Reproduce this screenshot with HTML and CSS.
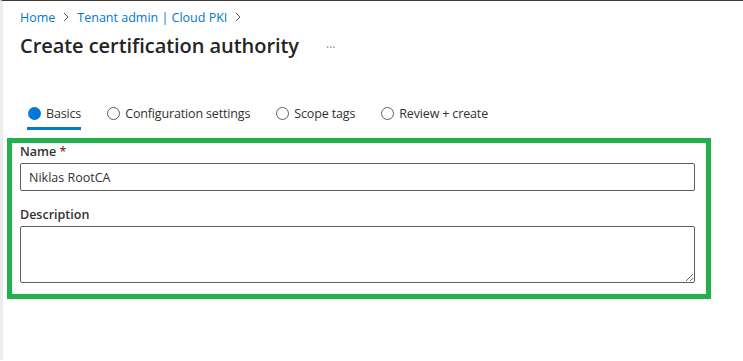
FILE: index.html
```html
<!DOCTYPE html>
<html>
<head>
<meta charset="utf-8">
<link rel="stylesheet" href="styles.css">
</head>
<body>
<div class="app">
  <div class="content">
    <nav class="crumbs">
      <a class="crumb">Home</a>
      <span class="chev"><svg width="8" height="10" viewBox="0 0 8 10"><path d="M2 1l4 4-4 4" fill="none" stroke="#605e5c" stroke-width="1"/></svg></span>
      <a class="crumb">Tenant admin | Cloud PKI</a>
      <span class="chev"><svg width="8" height="10" viewBox="0 0 8 10"><path d="M2 1l4 4-4 4" fill="none" stroke="#605e5c" stroke-width="1"/></svg></span>
    </nav>
    <div class="title-row">
      <h1 class="title">Create certification authority</h1>
      <span class="more">···</span>
    </div>
    <div class="tabs">
      <div class="tab active"><span class="dot filled"></span><span class="tab-label">Basics</span></div>
      <div class="tab"><span class="dot"></span><span class="tab-label">Configuration settings</span></div>
      <div class="tab"><span class="dot"></span><span class="tab-label">Scope tags</span></div>
      <div class="tab"><span class="dot"></span><span class="tab-label">Review + create</span></div>
    </div>
  </div>
  <section class="highlight">
    <label class="label">Name <span class="req">*</span></label>
    <div class="input">Niklas RootCA</div>
    <label class="label label-desc">Description</label>
    <textarea class="textarea"></textarea>
  </section>
</div>
</body>
</html>
```
FILE: styles.css
```css
html, body {
  margin: 0;
  padding: 0;
  background: #fff;
}
body {
  font-family: "Segoe UI", "Open Sans", "Noto Sans", sans-serif;
  color: #323130;
  font-size: 13px;
}
.app {
  border-top: 1px solid #3b3b3b;
  border-left: 3px solid #ebebeb;
  height: 360px;
  box-sizing: border-box;
}
.content {
  padding-left: 17px;
}
.crumbs {
  display: flex;
  align-items: center;
  gap: 6px;
  height: 16px;
  padding-top: 8px;
  font-size: 12.5px;
}
.crumb {
  color: #0078d4;
}
.chev {
  display: flex;
  align-items: center;
  margin: 0 1px;
}
.title-row {
  display: flex;
  align-items: center;
  margin-top: 5px;
  height: 30px;
}
.title {
  font-size: 20px;
  font-weight: 600;
  margin: 0;
  color: #242424;
  letter-spacing: -0.05px;
}
.more {
  color: #8a8886;
  font-size: 12px;
  margin-left: 27px;
  margin-top: 4px;
}
.tabs {
  display: flex;
  margin-top: 40px;
  padding-left: 7px;
  gap: 25px;
}
.tab {
  display: flex;
  align-items: center;
  gap: 5px;
  height: 30px;
  padding: 0 0 0 1px;
  box-sizing: border-box;
  border-bottom: 3px solid transparent;
}
.tab.active {
  border-bottom-color: #0078d4;
}
.dot {
  width: 11px;
  height: 11px;
  border: 1px solid #605e5c;
  border-radius: 50%;
  box-sizing: content-box;
}
.dot.filled {
  width: 13px;
  height: 13px;
  border: none;
  background: #0078d4;
}
.tab-label {
  font-size: 12.5px;
  color: #323130;
  letter-spacing: -0.15px;
}
.highlight {
  margin: 8px 32px 0 4px;
  border: 5px solid #22b14c;
  padding: 0 11px 11px 8px;
  display: flex;
  flex-direction: column;
}
.label {
  font-weight: 600;
  font-size: 12.5px;
  line-height: 16px;
  margin-top: 1px;
  margin-bottom: 3px;
}
.req {
  color: #a4262c;
}
.label-desc {
  margin-top: 16px;
}
.input {
  height: 28px;
  border: 1px solid #5f5e5c;
  border-radius: 2px;
  box-sizing: border-box;
  padding: 0 8px;
  display: flex;
  align-items: center;
  font-size: 12.5px;
}
.textarea {
  height: 57px;
  border: 1px solid #5f5e5c;
  border-radius: 2px;
  box-sizing: border-box;
  margin: 0;
  resize: vertical;
  font-family: inherit;
}
```
